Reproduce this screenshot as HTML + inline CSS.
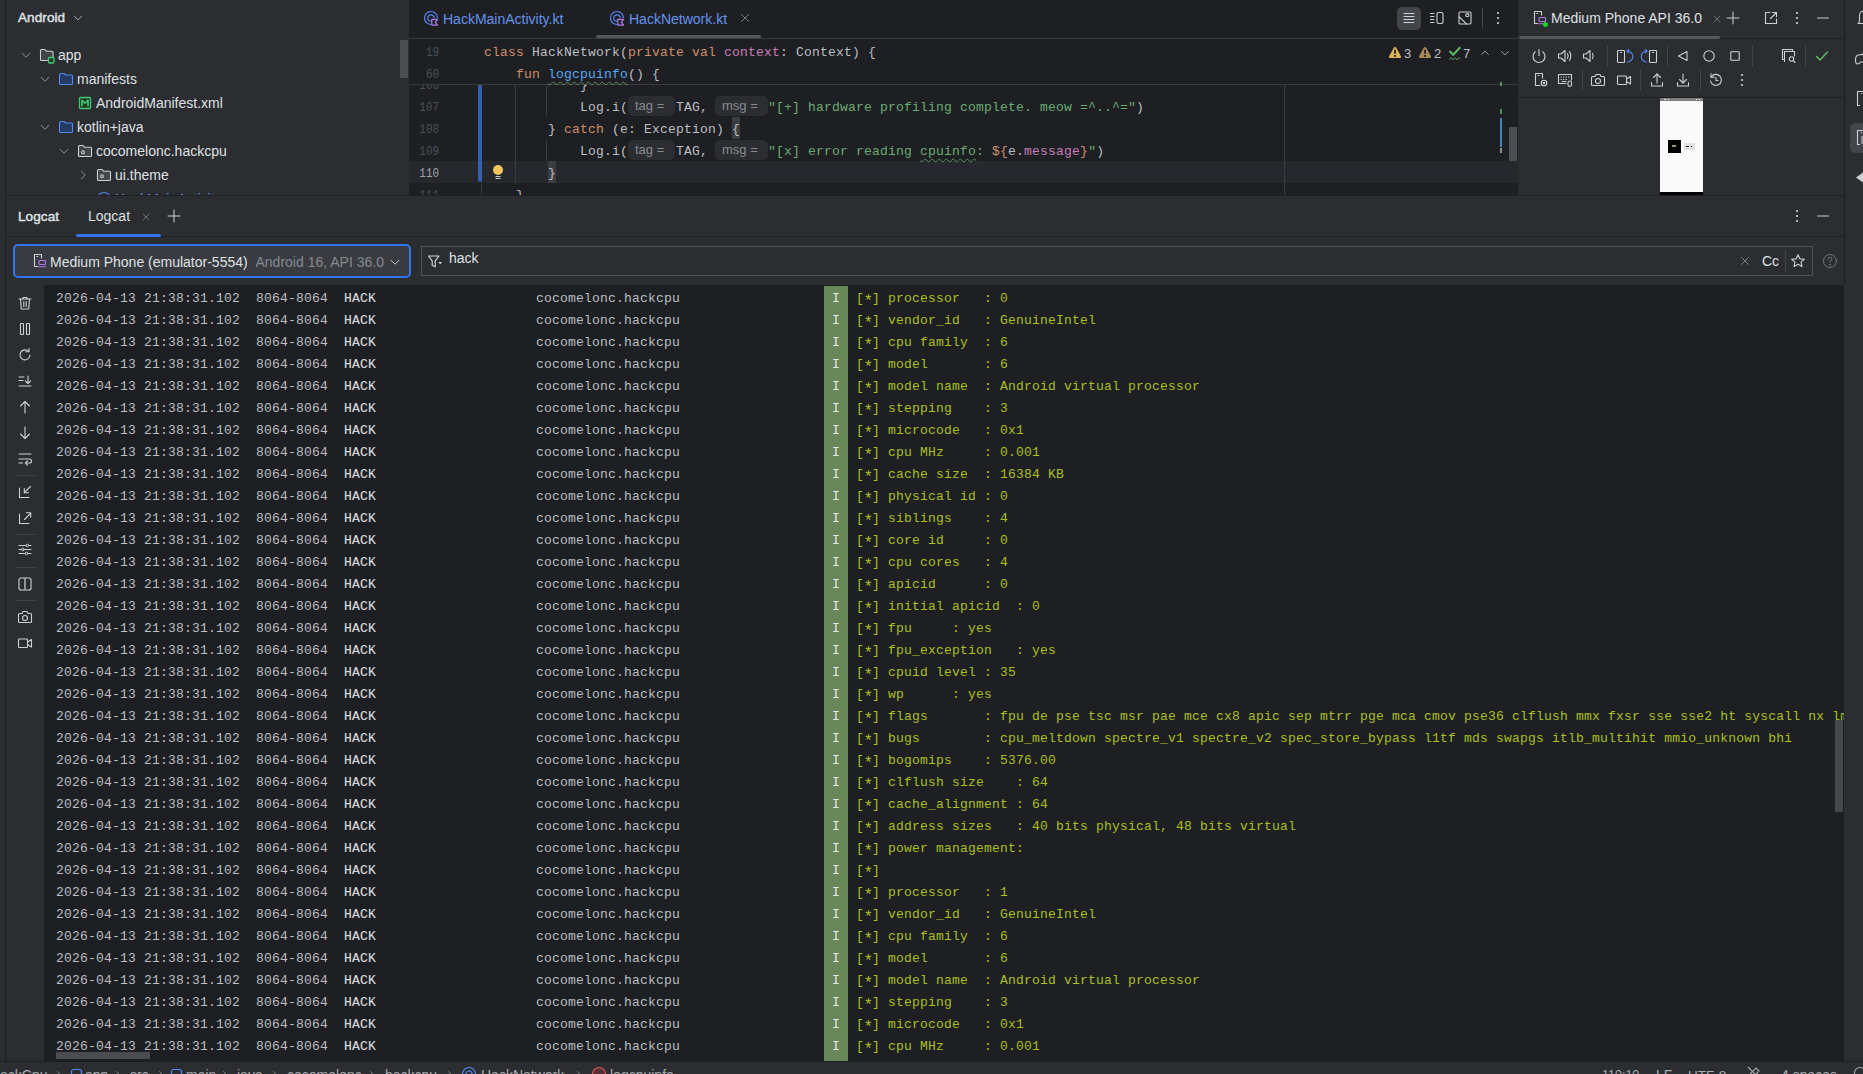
<!DOCTYPE html>
<html><head><meta charset="utf-8">
<style>
*{box-sizing:border-box}
html,body{margin:0;padding:0}
body{width:1863px;height:1074px;overflow:hidden;background:#2B2D30;position:relative;font-family:"Liberation Sans",sans-serif;color:#DFE1E5}
.a{position:absolute}
.t{position:absolute;white-space:pre}
.c{position:absolute;white-space:pre;font-family:"Liberation Mono",monospace;font-size:13px;line-height:13px;letter-spacing:0.2px}
.wv{text-decoration:underline wavy #5F8A5F;text-decoration-thickness:1px;text-underline-offset:3px}
.lr{position:absolute;left:44px;width:1800px;height:22px;font-family:"Liberation Mono",monospace;font-size:13px;letter-spacing:0.2px;line-height:22px;white-space:pre;color:#BCBEC4}
.lr span,.lr b,.lr i{position:absolute;top:2px}
.lr .ts{left:12px}
.lr .tg{left:300px;font-weight:normal;color:#D8DADE;-webkit-text-stroke:0.15px #D8DADE}
.lr .pk{left:492px}
.lr .bd{left:780px;top:0;width:24px;height:22px;background:#6A8759}
.lr .bd:after{content:"I";position:absolute;left:8px;top:2px;color:#E8EAE8;font-style:normal}
.lr .ms{left:812px;color:#A8C023}
.lr .as{left:819.5px;top:5px;font-size:16px;letter-spacing:0;color:#A8C023}
.hint{position:absolute;height:20px;border-radius:5px;background:#2B2D30;color:#868A91;font-size:13px;line-height:20px;white-space:pre;padding-left:7px}
svg{position:absolute;overflow:visible}
.ic{fill:none;stroke:#CED0D6;stroke-width:1.1}
</style></head><body>
<!-- left edge bar -->
<div class="a" style="left:5px;top:0;width:1px;height:1061px;background:#1E1F22"></div>

<!-- ===== project panel ===== -->
<div class="a" style="left:6px;top:0;width:394px;height:195px;background:#2B2D30;overflow:hidden"><div class="a" style="left:-6px;top:0;width:1863px;height:1074px">
<div class="t" style="left:18px;top:11.07px;font-size:13.5px;line-height:13.5px;color:#DFE1E5;font-weight:normal;-webkit-text-stroke:0.45px #DFE1E5;letter-spacing:0.1px">Android</div>
<div class="t" style="left:58px;top:48.15px;font-size:14px;line-height:14px;color:#DFE1E5;font-weight:normal;">app</div>
<div class="t" style="left:77px;top:72.15px;font-size:14px;line-height:14px;color:#DFE1E5;font-weight:normal;">manifests</div>
<div class="t" style="left:96px;top:96.15px;font-size:14px;line-height:14px;color:#DFE1E5;font-weight:normal;">AndroidManifest.xml</div>
<div class="t" style="left:77px;top:120.15px;font-size:14px;line-height:14px;color:#DFE1E5;font-weight:normal;">kotlin+java</div>
<div class="t" style="left:96px;top:144.15px;font-size:14px;line-height:14px;color:#DFE1E5;font-weight:normal;">cocomelonc.hackcpu</div>
<div class="t" style="left:115px;top:168.15px;font-size:14px;line-height:14px;color:#DFE1E5;font-weight:normal;">ui.theme</div>
<div class="t" style="left:115px;top:192.15px;font-size:14px;line-height:14px;color:#6493EE;font-weight:normal;">HackMainActivity</div>
<svg style="left:72.0px;top:12.0px" width="12" height="12" viewBox="0 0 16 16"><g fill="none" stroke="#CED0D6" stroke-width="1.1" stroke-linecap="round" stroke-linejoin="round"><path d="M3.5 6L8 10.5L12.5 6"/></g></svg>
<svg style="left:19.0px;top:48.0px" width="14" height="14" viewBox="0 0 16 16"><g fill="none" stroke="#9DA0A8" stroke-width="1.0" stroke-linecap="round" stroke-linejoin="round"><path d="M3.5 6L8 10.5L12.5 6"/></g></svg>
<svg style="left:38.0px;top:72.0px" width="14" height="14" viewBox="0 0 16 16"><g fill="none" stroke="#9DA0A8" stroke-width="1.0" stroke-linecap="round" stroke-linejoin="round"><path d="M3.5 6L8 10.5L12.5 6"/></g></svg>
<svg style="left:38.0px;top:120.0px" width="14" height="14" viewBox="0 0 16 16"><g fill="none" stroke="#9DA0A8" stroke-width="1.0" stroke-linecap="round" stroke-linejoin="round"><path d="M3.5 6L8 10.5L12.5 6"/></g></svg>
<svg style="left:57.0px;top:144.0px" width="14" height="14" viewBox="0 0 16 16"><g fill="none" stroke="#9DA0A8" stroke-width="1.0" stroke-linecap="round" stroke-linejoin="round"><path d="M3.5 6L8 10.5L12.5 6"/></g></svg>
<svg style="left:76.0px;top:168.0px" width="14" height="14" viewBox="0 0 16 16"><g fill="none" stroke="#9DA0A8" stroke-width="1.0" stroke-linecap="round" stroke-linejoin="round"><path d="M6 3.5L10.5 8L6 12.5"/></g></svg>
<svg style="left:39.0px;top:48.0px" width="16" height="16" viewBox="0 0 16 16"><g fill="none" stroke="#CED0D6" stroke-width="1.1" stroke-linecap="round" stroke-linejoin="round"><path d="M8.5 12.5H2.5Q1.5 12.5 1.5 11.5V2.5Q1.5 1.5 2.5 1.5H6L7.5 3.2H13Q14 3.2 14 4.2V8.5" fill="#43454A"/><rect x="9.5" y="9.5" width="5.5" height="5.5" rx="1.2" stroke="#3FCB6E" fill="#1F3A2A" stroke-width="1.3"/></g></svg>
<svg style="left:58.0px;top:71.0px" width="16" height="16" viewBox="0 0 16 16"><g fill="none" stroke="#CED0D6" stroke-width="1.1" stroke-linecap="round" stroke-linejoin="round"><path d="M1.5 3.5Q1.5 2.5 2.5 2.5H6L7.5 4H13.5Q14.5 4 14.5 5V12.5Q14.5 13.5 13.5 13.5H2.5Q1.5 13.5 1.5 12.5Z" fill="#253B63" stroke="#548AF7"/></g></svg>
<svg style="left:77.0px;top:95.0px" width="16" height="16" viewBox="0 0 16 16"><g fill="none" stroke="#CED0D6" stroke-width="1.1" stroke-linecap="round" stroke-linejoin="round"><rect x="2.5" y="2.5" width="11" height="11" rx="1" stroke="#3FCB6E" fill="#1F3A2A" stroke-width="1.3"/><path d="M5 10.8V5.2L8 8.3L11 5.2V10.8" stroke="#3FCB6E" stroke-width="1.6"/></g></svg>
<svg style="left:58.0px;top:119.0px" width="16" height="16" viewBox="0 0 16 16"><g fill="none" stroke="#CED0D6" stroke-width="1.1" stroke-linecap="round" stroke-linejoin="round"><path d="M1.5 3.5Q1.5 2.5 2.5 2.5H6L7.5 4H13.5Q14.5 4 14.5 5V12.5Q14.5 13.5 13.5 13.5H2.5Q1.5 13.5 1.5 12.5Z" fill="#253B63" stroke="#548AF7"/></g></svg>
<svg style="left:77.0px;top:143.0px" width="16" height="16" viewBox="0 0 16 16"><g fill="none" stroke="#CED0D6" stroke-width="1.1" stroke-linecap="round" stroke-linejoin="round"><path d="M1.5 3.5Q1.5 2.5 2.5 2.5H6L7.5 4.2H13.5Q14.5 4.2 14.5 5.2V12.5Q14.5 13.5 13.5 13.5H2.5Q1.5 13.5 1.5 12.5Z" fill="#43454A"/><circle cx="6" cy="9.2" r="1.4"/></g></svg>
<svg style="left:96.0px;top:167.0px" width="16" height="16" viewBox="0 0 16 16"><g fill="none" stroke="#CED0D6" stroke-width="1.1" stroke-linecap="round" stroke-linejoin="round"><path d="M1.5 3.5Q1.5 2.5 2.5 2.5H6L7.5 4.2H13.5Q14.5 4.2 14.5 5.2V12.5Q14.5 13.5 13.5 13.5H2.5Q1.5 13.5 1.5 12.5Z" fill="#43454A"/><circle cx="6" cy="9.2" r="1.4"/></g></svg>
<svg style="left:96px;top:191px" width="16" height="16" viewBox="0 0 16 16"><circle cx="8" cy="8" r="6.5" fill="none" stroke="#548AF7" stroke-width="1.2"/></svg>
</div></div>
<div class="a" style="left:400px;top:40px;width:8px;height:38px;background:#4D4E51"></div>

<!-- ===== editor ===== -->
<div class="a" style="left:409px;top:0;width:1110px;height:195px;background:#1E1F22;overflow:hidden"><div class="a" style="left:-409px;top:0;width:1863px;height:1074px">
<div class="a" style="left:409px;top:38px;width:1110px;height:1px;background:#393B40"></div>
<div class="a" style="left:596px;top:35px;width:165px;height:3px;border-radius:2px;background:#55575C"></div>
<div class="a" style="left:409px;top:161px;width:1109px;height:22px;background:#26282E"></div>
<!-- change marker -->
<div class="a" style="left:478px;top:84px;width:4px;height:98px;border-radius:0 0 2px 2px;background:#375FAD"></div>
<!-- indent guides -->
<div class="a" style="left:515px;top:85px;width:1px;height:98px;background:#393B40"></div>
<div class="a" style="left:546px;top:85px;width:1px;height:32px;background:#393B40"></div>
<div class="a" style="left:546px;top:139px;width:1px;height:22px;background:#393B40"></div>
<div class="a" style="left:481px;top:183px;width:1px;height:13px;background:#393B40"></div>
<!-- right margin -->
<div class="a" style="left:1284px;top:85px;width:1px;height:110px;background:#393B40"></div>
<!-- brace highlights -->
<div class="a" style="left:732px;top:117px;width:8px;height:22px;background:#3B3D41"></div>
<div class="a" style="left:548px;top:161px;width:8px;height:22px;background:#3B3D41"></div>
<div class="c" style="left:379px;top:79.00px;width:60px;text-align:right;transform:scaleX(0.84);transform-origin:100% 50%;letter-spacing:0"><span style="color:#4B5059" class="">106</span></div>
<div class="c" style="left:580px;top:79.00px;"><span style="color:#BCBEC4" class="">}</span></div>
<div class="c" style="left:379px;top:101.00px;width:60px;text-align:right;transform:scaleX(0.84);transform-origin:100% 50%;letter-spacing:0"><span style="color:#4B5059" class="">107</span></div>
<div class="c" style="left:580px;top:101.00px;"><span style="color:#BCBEC4" class="">Log.i(</span></div>
<div class="c" style="left:676px;top:101.00px;"><span style="color:#BCBEC4" class="">TAG,</span></div>
<div class="c" style="left:768px;top:101.00px;"><span style="color:#6AAB73" class="">&quot;[+] hardware profiling complete. meow =^..^=&quot;</span><span style="color:#BCBEC4" class="">)</span></div>
<div class="c" style="left:379px;top:123.00px;width:60px;text-align:right;transform:scaleX(0.84);transform-origin:100% 50%;letter-spacing:0"><span style="color:#4B5059" class="">108</span></div>
<div class="c" style="left:548px;top:123.00px;"><span style="color:#BCBEC4" class="">} </span><span style="color:#CF8E6D" class="">catch</span><span style="color:#BCBEC4" class=""> (e: Exception) {</span></div>
<div class="c" style="left:379px;top:145.00px;width:60px;text-align:right;transform:scaleX(0.84);transform-origin:100% 50%;letter-spacing:0"><span style="color:#4B5059" class="">109</span></div>
<div class="c" style="left:580px;top:145.00px;"><span style="color:#BCBEC4" class="">Log.i(</span></div>
<div class="c" style="left:676px;top:145.00px;"><span style="color:#BCBEC4" class="">TAG,</span></div>
<div class="c" style="left:768px;top:145.00px;"><span style="color:#6AAB73" class="">&quot;[x] error reading </span><span style="color:#6AAB73" class="wv">cpuinfo</span><span style="color:#6AAB73" class="">: </span><span style="color:#CF8E6D" class="">${</span><span style="color:#BCBEC4" class="">e.</span><span style="color:#C77DBB" class="">message</span><span style="color:#CF8E6D" class="">}</span><span style="color:#6AAB73" class="">&quot;</span><span style="color:#BCBEC4" class="">)</span></div>
<div class="c" style="left:379px;top:167.00px;width:60px;text-align:right;transform:scaleX(0.84);transform-origin:100% 50%;letter-spacing:0"><span style="color:#A1A3AB" class="">110</span></div>
<div class="c" style="left:548px;top:167.00px;"><span style="color:#BCBEC4" class="">}</span></div>
<div class="c" style="left:379px;top:189.00px;width:60px;text-align:right;transform:scaleX(0.84);transform-origin:100% 50%;letter-spacing:0"><span style="color:#4B5059" class="">111</span></div>
<div class="c" style="left:516px;top:189.00px;"><span style="color:#BCBEC4" class="">}</span></div>
<!-- hints -->
<div class="hint" style="left:628px;top:96px;width:47px">tag =</div>
<div class="hint" style="left:715px;top:96px;width:53px">msg =</div>
<div class="hint" style="left:628px;top:140px;width:47px">tag =</div>
<div class="hint" style="left:715px;top:140px;width:53px">msg =</div>
<!-- sticky header -->
<div class="a" style="left:409px;top:39px;width:1109px;height:45px;background:#1E1F22"></div>
<div class="a" style="left:409px;top:84px;width:1109px;height:1px;background:#393B40"></div>
<div class="c" style="left:379px;top:46.00px;width:60px;text-align:right;transform:scaleX(0.84);transform-origin:100% 50%;letter-spacing:0"><span style="color:#4B5059" class="">19</span></div>
<div class="c" style="left:484px;top:46.00px;"><span style="color:#CF8E6D" class="">class</span><span style="color:#BCBEC4" class=""> HackNetwork(</span><span style="color:#CF8E6D" class="">private val</span><span style="color:#BCBEC4" class=""> </span><span style="color:#C77DBB" class="">context</span><span style="color:#BCBEC4" class="">: Context) {</span></div>
<div class="c" style="left:379px;top:68.00px;width:60px;text-align:right;transform:scaleX(0.84);transform-origin:100% 50%;letter-spacing:0"><span style="color:#4B5059" class="">60</span></div>
<div class="c" style="left:516px;top:68.00px;"><span style="color:#CF8E6D" class="">fun</span><span style="color:#BCBEC4" class=""> </span><span style="color:#56A8F5" class="wv">logcpuinfo</span><span style="color:#BCBEC4" class="">() {</span></div>
<!-- editor scrollbar -->
<div class="a" style="left:1509px;top:127px;width:8px;height:34px;background:#4D4E51"></div>
<div class="t" style="left:443px;top:11.65px;font-size:14px;line-height:14px;color:#6493EE;font-weight:normal;">HackMainActivity.kt</div>
<div class="t" style="left:629px;top:11.65px;font-size:14px;line-height:14px;color:#6493EE;font-weight:normal;">HackNetwork.kt</div>
<svg style="left:423px;top:10px" width="16" height="16" viewBox="0 0 16 16"><g fill="none" stroke-width="1.2"><path d="M14.5 8A6.5 6.5 0 1 0 8 14.5" stroke="#548AF7"/><path d="M11.2 8A3.2 3.2 0 1 0 8 11.2" stroke="#548AF7"/><path d="M8.8 9.3H14.6L12.3 12.2L14.6 15.1H8.8Z" stroke="#B07AEB" stroke-linejoin="round"/></g></svg>
<svg style="left:609px;top:10px" width="16" height="16" viewBox="0 0 16 16"><g fill="none" stroke-width="1.2"><path d="M14.5 8A6.5 6.5 0 1 0 8 14.5" stroke="#548AF7"/><path d="M11.2 8A3.2 3.2 0 1 0 8 11.2" stroke="#548AF7"/><path d="M8.8 9.3H14.6L12.3 12.2L14.6 15.1H8.8Z" stroke="#B07AEB" stroke-linejoin="round"/></g></svg>
<svg style="left:738.0px;top:11.0px" width="14" height="14" viewBox="0 0 16 16"><g fill="none" stroke="#868A91" stroke-width="1.0" stroke-linecap="round" stroke-linejoin="round"><path d="M4 4L12 12M12 4L4 12"/></g></svg>
<div class="a" style="left:1397px;top:7px;width:24px;height:23px;border-radius:5px;background:#43454A"></div>
<svg style="left:1400.5px;top:10.0px" width="16" height="16" viewBox="0 0 16 16"><g fill="none" stroke="#CED0D6" stroke-width="1.1" stroke-linecap="round" stroke-linejoin="round"><path d="M3 3.5H13M3 6.5H13M3 9.5H13M3 12.5H13"/></g></svg>
<svg style="left:1428.5px;top:10.0px" width="16" height="16" viewBox="0 0 16 16"><g fill="none" stroke="#CED0D6" stroke-width="1.1" stroke-linecap="round" stroke-linejoin="round"><path d="M1.5 3.5H5M1.5 6.5H5M1.5 9.5H5M1.5 12.5H5"/><rect x="8" y="2.5" width="6" height="11" rx="1.5"/></g></svg>
<svg style="left:1456.5px;top:10.0px" width="16" height="16" viewBox="0 0 16 16"><g fill="none" stroke="#CED0D6" stroke-width="1.1" stroke-linecap="round" stroke-linejoin="round"><rect x="2" y="2" width="12" height="12" rx="1.2"/><path d="M2.2 7L9.5 13.8"/><circle cx="10.3" cy="5.2" r="1.6"/></g></svg>
<div class="a" style="left:1482px;top:8px;width:1px;height:20px;background:#43454A"></div>
<svg style="left:1490.0px;top:10.0px" width="16" height="16" viewBox="0 0 16 16"><g fill="none" stroke="#CED0D6" stroke-width="1.1" stroke-linecap="round" stroke-linejoin="round"><g fill="#CED0D6" stroke="none"><circle cx="8" cy="3" r="1.1"/><circle cx="8" cy="8" r="1.1"/><circle cx="8" cy="13" r="1.1"/></g></g></svg>
<svg style="left:1388px;top:46px" width="14" height="14" viewBox="0 0 14 14"><path d="M7 1Q7.9 1 8.4 1.9L12.8 10Q13.6 12 11.6 12H2.4Q0.4 12 1.2 10L5.6 1.9Q6.1 1 7 1Z" fill="#DFB25A"/><path d="M7 3.8V7.8" stroke="#1E1F22" stroke-width="1.8"/><rect x="6.1" y="9" width="1.8" height="1.8" fill="#1E1F22"/></svg>
<div class="t" style="left:1404px;top:47.00px;font-size:13px;line-height:13px;color:#BCBEC4;font-weight:normal;">3</div>
<svg style="left:1418px;top:46px" width="14" height="14" viewBox="0 0 14 14"><path d="M7 1Q7.9 1 8.4 1.9L12.8 10Q13.6 12 11.6 12H2.4Q0.4 12 1.2 10L5.6 1.9Q6.1 1 7 1Z" fill="#A68A55"/><path d="M7 3.8V7.8" stroke="#1E1F22" stroke-width="1.8"/><rect x="6.1" y="9" width="1.8" height="1.8" fill="#1E1F22"/></svg>
<div class="t" style="left:1434px;top:47.00px;font-size:13px;line-height:13px;color:#BCBEC4;font-weight:normal;">2</div>
<svg style="left:1448px;top:45px" width="14" height="16" viewBox="0 0 14 16"><path d="M1.5 6L5.2 9.8L12.2 2.2" fill="none" stroke="#5FB865" stroke-width="2"/><path d="M1 15L3 12.5L5 15L7 12.5L9 15L11 12.5L12.5 14" fill="none" stroke="#549159" stroke-width="1"/></svg>
<div class="t" style="left:1463px;top:47.00px;font-size:13px;line-height:13px;color:#BCBEC4;font-weight:normal;">7</div>
<svg style="left:1479.0px;top:47.0px" width="12" height="12" viewBox="0 0 16 16"><g fill="none" stroke="#CED0D6" stroke-width="1.0" stroke-linecap="round" stroke-linejoin="round"><path d="M3.5 10L8 5.5L12.5 10"/></g></svg>
<svg style="left:1499.0px;top:47.0px" width="12" height="12" viewBox="0 0 16 16"><g fill="none" stroke="#CED0D6" stroke-width="1.0" stroke-linecap="round" stroke-linejoin="round"><path d="M3.5 6L8 10.5L12.5 6"/></g></svg>
<svg style="left:490px;top:164px" width="16" height="16" viewBox="0 0 16 16"><circle cx="8" cy="6" r="5" fill="#F2C55C"/><path d="M5.5 12.5H10.5M5.5 14.5H10.5" stroke="#DFE1E5" stroke-width="0.9"/></svg>
<div class="a" style="left:1500px;top:82px;width:2px;height:4px;background:#549159"></div>
<div class="a" style="left:1500px;top:109px;width:2px;height:5px;background:#549159"></div>
<div class="a" style="left:1500px;top:118px;width:2px;height:29px;background:#4A82C0"></div>
<div class="a" style="left:1500px;top:148px;width:2px;height:5px;background:#8C8F94"></div>
</div></div>

<!-- ===== running devices ===== -->
<div class="a" style="left:1518px;top:0;width:327px;height:195px;background:#2B2D30"></div>
<div class="a" style="left:1518px;top:38px;width:327px;height:1px;background:#1E1F22"></div>
<div class="a" style="left:1519px;top:36px;width:201px;height:3px;border-radius:2px;background:#55575C"></div>
<div class="a" style="left:1518px;top:97px;width:327px;height:1px;background:#1E1F22"></div>
<svg style="left:1532.0px;top:10.0px" width="16" height="16" viewBox="0 0 16 16"><g fill="none" stroke="#CED0D6" stroke-width="1.1" stroke-linecap="round" stroke-linejoin="round"><path d="M5.5 13.5H2.5V1.5H9.5V5"/><path d="M4.8 3.5H5.8"/><rect x="7" y="7.5" width="6.5" height="4" rx="0.8" stroke="#B07AEB"/><path d="M6.5 13.8H13.8" stroke="#B07AEB"/></g></svg>
<div class="a" style="left:1543px;top:22px;width:5px;height:5px;border-radius:3px;background:#19D31F"></div>
<div class="t" style="left:1551px;top:11.15px;font-size:14px;line-height:14px;color:#DFE1E5;font-weight:normal;">Medium Phone API 36.0</div>
<svg style="left:1710.5px;top:12.5px" width="12" height="12" viewBox="0 0 16 16"><g fill="none" stroke="#868A91" stroke-width="1.0" stroke-linecap="round" stroke-linejoin="round"><path d="M4 4L12 12M12 4L4 12"/></g></svg>
<svg style="left:1724.5px;top:9.5px" width="16" height="16" viewBox="0 0 16 16"><g fill="none" stroke="#CED0D6" stroke-width="1.0" stroke-linecap="round" stroke-linejoin="round"><path d="M8 2V14M2 8H14"/></g></svg>
<svg style="left:1763.0px;top:10.0px" width="16" height="16" viewBox="0 0 16 16"><g fill="none" stroke="#CED0D6" stroke-width="1.1" stroke-linecap="round" stroke-linejoin="round"><path d="M7 2.5H2.5V13.5H13.5V9"/><path d="M9.5 2.5H13.5V6.5"/><path d="M13.5 2.5L7.5 8.5"/></g></svg>
<svg style="left:1789.0px;top:10.0px" width="16" height="16" viewBox="0 0 16 16"><g fill="none" stroke="#CED0D6" stroke-width="1.1" stroke-linecap="round" stroke-linejoin="round"><g fill="#CED0D6" stroke="none"><circle cx="8" cy="3" r="1.1"/><circle cx="8" cy="8" r="1.1"/><circle cx="8" cy="13" r="1.1"/></g></g></svg>
<svg style="left:1814.5px;top:10.0px" width="16" height="16" viewBox="0 0 16 16"><g fill="none" stroke="#CED0D6" stroke-width="1.1" stroke-linecap="round" stroke-linejoin="round"><path d="M2.5 8H13.5"/></g></svg>
<svg style="left:1531.0px;top:48.0px" width="16" height="16" viewBox="0 0 16 16"><g fill="none" stroke="#CED0D6" stroke-width="1.1" stroke-linecap="round" stroke-linejoin="round"><path d="M4.2 3.8A6 6 0 1 0 11.8 3.8"/><path d="M8 1.5V7.5"/></g></svg>
<svg style="left:1557.0px;top:48.0px" width="16" height="16" viewBox="0 0 16 16"><g fill="none" stroke="#CED0D6" stroke-width="1.1" stroke-linecap="round" stroke-linejoin="round"><path d="M1.5 6H4L8 2.5V13.5L4 10H1.5Z"/><path d="M10.5 5.5Q11.8 8 10.5 10.5"/><path d="M12.5 3.5Q15 8 12.5 12.5"/></g></svg>
<svg style="left:1581.0px;top:48.0px" width="16" height="16" viewBox="0 0 16 16"><g fill="none" stroke="#CED0D6" stroke-width="1.1" stroke-linecap="round" stroke-linejoin="round"><path d="M2.5 6H5L9 2.5V13.5L5 10H2.5Z"/><path d="M11.5 5.5Q12.8 8 11.5 10.5"/></g></svg>
<svg style="left:1616.0px;top:48.0px" width="16" height="16" viewBox="0 0 16 16"><g fill="none" stroke="#CED0D6" stroke-width="1.1" stroke-linecap="round" stroke-linejoin="round"><rect x="1.5" y="2.5" width="7" height="12" rx="0.8"/><path d="M4.5 4.5H5.5"/><g stroke="#548AF7"><path d="M11 3A5.5 5.5 0 0 1 11.5 14"/><path d="M11 3L13 1.5M11 3L12.8 4.8"/></g></g></svg>
<svg style="left:1642.0px;top:48.0px" width="16" height="16" viewBox="0 0 16 16"><g fill="none" stroke="#CED0D6" stroke-width="1.1" stroke-linecap="round" stroke-linejoin="round"><rect x="7.5" y="2.5" width="7" height="12" rx="0.8"/><path d="M10.5 4.5H11.5"/><g stroke="#548AF7"><path d="M5 3A5.5 5.5 0 0 0 4.5 14"/><path d="M5 3L3 1.5M5 3L3.2 4.8"/></g></g></svg>
<svg style="left:1675.0px;top:48.0px" width="16" height="16" viewBox="0 0 16 16"><g fill="none" stroke="#CED0D6" stroke-width="1.1" stroke-linecap="round" stroke-linejoin="round"><path d="M3.5 8L12 3.5V12.5Z"/></g></svg>
<svg style="left:1701.0px;top:48.0px" width="16" height="16" viewBox="0 0 16 16"><g fill="none" stroke="#CED0D6" stroke-width="1.1" stroke-linecap="round" stroke-linejoin="round"><circle cx="8" cy="8" r="5.2"/></g></svg>
<svg style="left:1727.0px;top:48.0px" width="16" height="16" viewBox="0 0 16 16"><g fill="none" stroke="#CED0D6" stroke-width="1.1" stroke-linecap="round" stroke-linejoin="round"><rect x="3.8" y="3.8" width="8.4" height="8.4" rx="0.5"/></g></svg>
<svg style="left:1781.0px;top:48.0px" width="16" height="16" viewBox="0 0 16 16"><g fill="none" stroke="#CED0D6" stroke-width="1.1" stroke-linecap="round" stroke-linejoin="round"><path d="M3.5 11.5H1.5V1.5H11.5V3.5"/><path d="M3.5 13.5V3.5H13.5V8"/><circle cx="10.5" cy="11" r="2.2"/><path d="M12.2 12.7L14 14.5"/></g></svg>
<svg style="left:1814.0px;top:48.0px" width="16" height="16" viewBox="0 0 16 16"><g fill="none" stroke="#5FB865" stroke-width="1.6" stroke-linecap="round" stroke-linejoin="round"><path d="M2.5 8.5L6 12L13.5 4"/></g></svg>
<div class="a" style="left:1607px;top:46px;width:1px;height:20px;background:#43454A"></div>
<div class="a" style="left:1667px;top:46px;width:1px;height:20px;background:#43454A"></div>
<div class="a" style="left:1752px;top:46px;width:1px;height:20px;background:#43454A"></div>
<div class="a" style="left:1805px;top:46px;width:1px;height:20px;background:#43454A"></div>
<svg style="left:1533.0px;top:72.0px" width="16" height="16" viewBox="0 0 16 16"><g fill="none" stroke="#CED0D6" stroke-width="1.1" stroke-linecap="round" stroke-linejoin="round"><path d="M7 13.5H2.5V1.5H9.5V6"/><path d="M5 3.5H6"/><circle cx="11" cy="11" r="2.8"/><circle cx="11" cy="11" r="0.8"/></g></svg>
<svg style="left:1557.0px;top:72.0px" width="16" height="16" viewBox="0 0 16 16"><g fill="none" stroke="#CED0D6" stroke-width="1.1" stroke-linecap="round" stroke-linejoin="round"><path d="M9 11.5H1.5V2.5H14.5V8"/><path d="M4 5H4.5M6.5 5H7M9 5H9.5M11.5 5H12M4 7.5H4.5M6.5 7.5H7M9 7.5H9.5M5 9.5H9"/><rect x="11" y="9" width="3.5" height="5.5" rx="1.7"/></g></svg>
<svg style="left:1590.0px;top:72.0px" width="16" height="16" viewBox="0 0 16 16"><g fill="none" stroke="#CED0D6" stroke-width="1.1" stroke-linecap="round" stroke-linejoin="round"><path d="M1.5 5.5Q1.5 4.5 2.5 4.5H5L6 2.5H10L11 4.5H13.5Q14.5 4.5 14.5 5.5V12.5Q14.5 13.5 13.5 13.5H2.5Q1.5 13.5 1.5 12.5Z"/><circle cx="8" cy="9" r="2.5"/></g></svg>
<svg style="left:1616.0px;top:72.0px" width="16" height="16" viewBox="0 0 16 16"><g fill="none" stroke="#CED0D6" stroke-width="1.1" stroke-linecap="round" stroke-linejoin="round"><rect x="1.5" y="4" width="9" height="8.5" rx="0.8"/><path d="M10.5 7L14.5 4.5V12L10.5 9.5"/></g></svg>
<svg style="left:1649.0px;top:72.0px" width="16" height="16" viewBox="0 0 16 16"><g fill="none" stroke="#CED0D6" stroke-width="1.1" stroke-linecap="round" stroke-linejoin="round"><path d="M2.5 10.5V14H13.5V10.5"/><path d="M8 2V11"/><path d="M4.5 5.5L8 2L11.5 5.5"/></g></svg>
<svg style="left:1675.0px;top:72.0px" width="16" height="16" viewBox="0 0 16 16"><g fill="none" stroke="#CED0D6" stroke-width="1.1" stroke-linecap="round" stroke-linejoin="round"><path d="M2.5 10.5V14H13.5V10.5"/><path d="M8 2V11"/><path d="M4.5 7.5L8 11L11.5 7.5"/></g></svg>
<svg style="left:1708.0px;top:72.0px" width="16" height="16" viewBox="0 0 16 16"><g fill="none" stroke="#CED0D6" stroke-width="1.1" stroke-linecap="round" stroke-linejoin="round"><path d="M3.2 5A5.5 5.5 0 1 1 2.5 9"/><path d="M3 1.8V5.2H6.4"/><path d="M8 5.5V8.5H10"/></g></svg>
<svg style="left:1734.0px;top:72.0px" width="16" height="16" viewBox="0 0 16 16"><g fill="none" stroke="#CED0D6" stroke-width="1.1" stroke-linecap="round" stroke-linejoin="round"><g fill="#CED0D6" stroke="none"><circle cx="8" cy="3" r="1.1"/><circle cx="8" cy="8" r="1.1"/><circle cx="8" cy="13" r="1.1"/></g></g></svg>
<div class="a" style="left:1582px;top:70px;width:1px;height:20px;background:#43454A"></div>
<div class="a" style="left:1640px;top:70px;width:1px;height:20px;background:#43454A"></div>
<div class="a" style="left:1700px;top:70px;width:1px;height:20px;background:#43454A"></div>
<!-- phone preview -->
<div class="a" style="left:1660px;top:98px;width:43px;height:94px;background:#FAFAFA"></div>
<div class="a" style="left:1660px;top:98px;width:43px;height:3px;background:#7E7E7E"></div>
<div class="a" style="left:1664px;top:99px;width:1px;height:1px;background:#DDD"></div>
<div class="a" style="left:1665px;top:99px;width:1px;height:1px;background:#FFF"></div>
<div class="a" style="left:1668px;top:99px;width:1px;height:1px;background:#FFF"></div>
<div class="a" style="left:1696px;top:99px;width:1px;height:1px;background:#FFF"></div>
<div class="a" style="left:1699px;top:99px;width:1px;height:1px;background:#FFF"></div>
<div class="a" style="left:1660px;top:192px;width:43px;height:3px;background:#000"></div>
<div class="a" style="left:1668px;top:140px;width:13px;height:13px;background:#000"></div>
<div class="a" style="left:1672px;top:145px;width:4px;height:2px;background:#8A9A80"></div>
<div class="a" style="left:1684px;top:143px;width:11px;height:7px;background:#E0E0E0"></div>
<div class="a" style="left:1686px;top:146px;width:3px;height:1px;background:#111"></div>
<div class="a" style="left:1691px;top:146px;width:1px;height:1px;background:#111"></div>

<!-- right strip -->
<div class="a" style="left:1845px;top:0;width:18px;height:1061px;overflow:hidden"><div class="a" style="left:-1845px;top:0;width:1863px;height:1074px"><div class="a" style="left:1850px;top:123px;width:20px;height:30px;border-radius:5px;background:#43454A"></div>
<svg style="left:1856px;top:9px" width="14" height="16" viewBox="0 0 14 16"><path d="M1.5 14.5H13M2.5 14.5Q3.5 13 3.5 11V7Q3.5 2 8 2Q12.5 2 12.5 7" fill="none" stroke="#CED0D6" stroke-width="1.1"/></svg>
<svg style="left:1854px;top:51px" width="14" height="16" viewBox="0 0 14 16"><path d="M4 4Q1.5 5 1.5 9Q1.5 13 3.5 13Q5 13 6.5 11H12V3.5Q9 2.5 6.5 4Q5 3.5 4 4Z" fill="none" stroke="#CED0D6" stroke-width="1.1"/></svg>
<svg style="left:1856px;top:90px" width="14" height="17" viewBox="0 0 14 17"><path d="M4 15.5H1.5V1.5H12" fill="none" stroke="#CED0D6" stroke-width="1.1"/><path d="M5 3.5H6" stroke="#CED0D6"/></svg>
<svg style="left:1856px;top:129px" width="14" height="17" viewBox="0 0 14 17"><path d="M4 15.5H1.5V1.5H12" fill="none" stroke="#CED0D6" stroke-width="1.1"/><path d="M5 3.5H6M6 7V15" stroke="#CED0D6"/></svg>
<svg style="left:1855px;top:170px" width="14" height="15" viewBox="0 0 14 15"><path d="M1 7.5L10 1V14Z" fill="#CED0D6"/></svg></div></div>
<div class="a" style="left:1844px;top:0;width:1px;height:1061px;background:#1E1F22"></div>

<!-- horizontal border -->
<div class="a" style="left:6px;top:195px;width:1838px;height:1px;background:#1E1F22"></div>

<!-- ===== logcat ===== -->
<div class="a" style="left:6px;top:236px;width:1838px;height:1px;background:#1E1F22"></div>
<div class="a" style="left:76px;top:234px;width:85px;height:3px;border-radius:2px;background:#3574F0"></div>
<!-- device combo -->
<div class="a" style="left:13px;top:244px;width:398px;height:34px;border:2px solid #3574F0;border-radius:5px;background:#393B40"></div>
<!-- filter field -->
<div class="a" style="left:421px;top:246px;width:1392px;height:30px;border:1px solid #4E5157;background:#2B2D30"></div>
<div class="a" style="left:1785px;top:250px;width:1px;height:22px;background:#43454A"></div>
<div class="t" style="left:18px;top:209.57px;font-size:13.5px;line-height:13.5px;color:#DFE1E5;font-weight:normal;-webkit-text-stroke:0.45px #DFE1E5;letter-spacing:0.1px">Logcat</div>
<div class="t" style="left:88px;top:209.15px;font-size:14px;line-height:14px;color:#DFE1E5;font-weight:normal;">Logcat</div>
<svg style="left:140.0px;top:211.0px" width="12" height="12" viewBox="0 0 16 16"><g fill="none" stroke="#868A91" stroke-width="1.0" stroke-linecap="round" stroke-linejoin="round"><path d="M4 4L12 12M12 4L4 12"/></g></svg>
<svg style="left:165.5px;top:207.5px" width="16" height="16" viewBox="0 0 16 16"><g fill="none" stroke="#CED0D6" stroke-width="1.0" stroke-linecap="round" stroke-linejoin="round"><path d="M8 2V14M2 8H14"/></g></svg>
<svg style="left:1789.0px;top:208.0px" width="16" height="16" viewBox="0 0 16 16"><g fill="none" stroke="#CED0D6" stroke-width="1.1" stroke-linecap="round" stroke-linejoin="round"><g fill="#CED0D6" stroke="none"><circle cx="8" cy="3" r="1.1"/><circle cx="8" cy="8" r="1.1"/><circle cx="8" cy="13" r="1.1"/></g></g></svg>
<svg style="left:1814.5px;top:208.0px" width="16" height="16" viewBox="0 0 16 16"><g fill="none" stroke="#CED0D6" stroke-width="1.1" stroke-linecap="round" stroke-linejoin="round"><path d="M2.5 8H13.5"/></g></svg>
<svg style="left:32.0px;top:253.0px" width="16" height="16" viewBox="0 0 16 16"><g fill="none" stroke="#CED0D6" stroke-width="1.1" stroke-linecap="round" stroke-linejoin="round"><path d="M5.5 13.5H2.5V1.5H9.5V5"/><path d="M4.8 3.5H5.8"/><rect x="7" y="7.5" width="6.5" height="4" rx="0.8" stroke="#B07AEB"/><path d="M6.5 13.8H13.8" stroke="#B07AEB"/></g></svg>
<div class="t" style="left:50px;top:254.65px;font-size:14px;line-height:14px;color:#DFE1E5;font-weight:normal;">Medium Phone (emulator-5554)</div>
<div class="t" style="left:255.5px;top:254.65px;font-size:14px;line-height:14px;color:#868A91;font-weight:normal;">Android 16, API 36.0</div>
<svg style="left:388.0px;top:255.0px" width="14" height="14" viewBox="0 0 16 16"><g fill="none" stroke="#CED0D6" stroke-width="1.1" stroke-linecap="round" stroke-linejoin="round"><path d="M3.5 6L8 10.5L12.5 6"/></g></svg>
<svg style="left:427.0px;top:252.5px" width="16" height="16" viewBox="0 0 16 16"><g fill="none" stroke="#CED0D6" stroke-width="1.2" stroke-linecap="round" stroke-linejoin="round"><path d="M1.5 3H12L8.2 7.8V13.8L5.2 12.5V7.8Z"/><path d="M11.2 9H15.2L13.2 11.2Z" fill="#CED0D6" stroke="none"/></g></svg>
<div class="t" style="left:449px;top:251.15px;font-size:14px;line-height:14px;color:#DFE1E5;font-weight:normal;">hack</div>
<svg style="left:1738.0px;top:254.0px" width="14" height="14" viewBox="0 0 16 16"><g fill="none" stroke="#868A91" stroke-width="1.0" stroke-linecap="round" stroke-linejoin="round"><path d="M4 4L12 12M12 4L4 12"/></g></svg>
<div class="t" style="left:1762px;top:254.15px;font-size:14px;line-height:14px;color:#DFE1E5;font-weight:normal;">Cc</div>
<svg style="left:1790.0px;top:253.0px" width="16" height="16" viewBox="0 0 16 16"><g fill="none" stroke="#CED0D6" stroke-width="1.1" stroke-linecap="round" stroke-linejoin="round"><path d="M8 1.8L9.9 5.9L14.3 6.3L11 9.2L12 13.6L8 11.3L4 13.6L5 9.2L1.7 6.3L6.1 5.9Z"/></g></svg>
<svg style="left:1822.0px;top:253.0px" width="16" height="16" viewBox="0 0 16 16"><g fill="none" stroke="#6F737A" stroke-width="1.0" stroke-linecap="round" stroke-linejoin="round"><circle cx="8" cy="8" r="6.5"/><path d="M6 6.3Q6 4.3 8 4.3Q10 4.3 10 6.1Q10 7.3 8 8.2V9.5"/><circle cx="8" cy="11.7" r="0.5" fill="#6F737A"/></g></svg>

<!-- logcat content -->
<div class="a" style="left:44px;top:285px;width:1800px;height:776px;background:#1E1F22"></div>
<div class="lr" style="top:286px"><span class="ts">2026-04-13 21:38:31.102  8064-8064  </span><b class="tg">HACK</b><span class="pk">cocomelonc.hackcpu</span><i class="bd"></i><span class="ms">[ ] processor   : 0</span><span class="as">*</span></div>
<div class="lr" style="top:308px"><span class="ts">2026-04-13 21:38:31.102  8064-8064  </span><b class="tg">HACK</b><span class="pk">cocomelonc.hackcpu</span><i class="bd"></i><span class="ms">[ ] vendor_id   : GenuineIntel</span><span class="as">*</span></div>
<div class="lr" style="top:330px"><span class="ts">2026-04-13 21:38:31.102  8064-8064  </span><b class="tg">HACK</b><span class="pk">cocomelonc.hackcpu</span><i class="bd"></i><span class="ms">[ ] cpu family  : 6</span><span class="as">*</span></div>
<div class="lr" style="top:352px"><span class="ts">2026-04-13 21:38:31.102  8064-8064  </span><b class="tg">HACK</b><span class="pk">cocomelonc.hackcpu</span><i class="bd"></i><span class="ms">[ ] model       : 6</span><span class="as">*</span></div>
<div class="lr" style="top:374px"><span class="ts">2026-04-13 21:38:31.102  8064-8064  </span><b class="tg">HACK</b><span class="pk">cocomelonc.hackcpu</span><i class="bd"></i><span class="ms">[ ] model name  : Android virtual processor</span><span class="as">*</span></div>
<div class="lr" style="top:396px"><span class="ts">2026-04-13 21:38:31.102  8064-8064  </span><b class="tg">HACK</b><span class="pk">cocomelonc.hackcpu</span><i class="bd"></i><span class="ms">[ ] stepping    : 3</span><span class="as">*</span></div>
<div class="lr" style="top:418px"><span class="ts">2026-04-13 21:38:31.102  8064-8064  </span><b class="tg">HACK</b><span class="pk">cocomelonc.hackcpu</span><i class="bd"></i><span class="ms">[ ] microcode   : 0x1</span><span class="as">*</span></div>
<div class="lr" style="top:440px"><span class="ts">2026-04-13 21:38:31.102  8064-8064  </span><b class="tg">HACK</b><span class="pk">cocomelonc.hackcpu</span><i class="bd"></i><span class="ms">[ ] cpu MHz     : 0.001</span><span class="as">*</span></div>
<div class="lr" style="top:462px"><span class="ts">2026-04-13 21:38:31.102  8064-8064  </span><b class="tg">HACK</b><span class="pk">cocomelonc.hackcpu</span><i class="bd"></i><span class="ms">[ ] cache size  : 16384 KB</span><span class="as">*</span></div>
<div class="lr" style="top:484px"><span class="ts">2026-04-13 21:38:31.102  8064-8064  </span><b class="tg">HACK</b><span class="pk">cocomelonc.hackcpu</span><i class="bd"></i><span class="ms">[ ] physical id : 0</span><span class="as">*</span></div>
<div class="lr" style="top:506px"><span class="ts">2026-04-13 21:38:31.102  8064-8064  </span><b class="tg">HACK</b><span class="pk">cocomelonc.hackcpu</span><i class="bd"></i><span class="ms">[ ] siblings    : 4</span><span class="as">*</span></div>
<div class="lr" style="top:528px"><span class="ts">2026-04-13 21:38:31.102  8064-8064  </span><b class="tg">HACK</b><span class="pk">cocomelonc.hackcpu</span><i class="bd"></i><span class="ms">[ ] core id     : 0</span><span class="as">*</span></div>
<div class="lr" style="top:550px"><span class="ts">2026-04-13 21:38:31.102  8064-8064  </span><b class="tg">HACK</b><span class="pk">cocomelonc.hackcpu</span><i class="bd"></i><span class="ms">[ ] cpu cores   : 4</span><span class="as">*</span></div>
<div class="lr" style="top:572px"><span class="ts">2026-04-13 21:38:31.102  8064-8064  </span><b class="tg">HACK</b><span class="pk">cocomelonc.hackcpu</span><i class="bd"></i><span class="ms">[ ] apicid      : 0</span><span class="as">*</span></div>
<div class="lr" style="top:594px"><span class="ts">2026-04-13 21:38:31.102  8064-8064  </span><b class="tg">HACK</b><span class="pk">cocomelonc.hackcpu</span><i class="bd"></i><span class="ms">[ ] initial apicid  : 0</span><span class="as">*</span></div>
<div class="lr" style="top:616px"><span class="ts">2026-04-13 21:38:31.102  8064-8064  </span><b class="tg">HACK</b><span class="pk">cocomelonc.hackcpu</span><i class="bd"></i><span class="ms">[ ] fpu     : yes</span><span class="as">*</span></div>
<div class="lr" style="top:638px"><span class="ts">2026-04-13 21:38:31.102  8064-8064  </span><b class="tg">HACK</b><span class="pk">cocomelonc.hackcpu</span><i class="bd"></i><span class="ms">[ ] fpu_exception   : yes</span><span class="as">*</span></div>
<div class="lr" style="top:660px"><span class="ts">2026-04-13 21:38:31.102  8064-8064  </span><b class="tg">HACK</b><span class="pk">cocomelonc.hackcpu</span><i class="bd"></i><span class="ms">[ ] cpuid level : 35</span><span class="as">*</span></div>
<div class="lr" style="top:682px"><span class="ts">2026-04-13 21:38:31.102  8064-8064  </span><b class="tg">HACK</b><span class="pk">cocomelonc.hackcpu</span><i class="bd"></i><span class="ms">[ ] wp      : yes</span><span class="as">*</span></div>
<div class="lr" style="top:704px"><span class="ts">2026-04-13 21:38:31.102  8064-8064  </span><b class="tg">HACK</b><span class="pk">cocomelonc.hackcpu</span><i class="bd"></i><span class="ms">[ ] flags       : fpu de pse tsc msr pae mce cx8 apic sep mtrr pge mca cmov pse36 clflush mmx fxsr sse sse2 ht syscall nx lm constant_tsc</span><span class="as">*</span></div>
<div class="lr" style="top:726px"><span class="ts">2026-04-13 21:38:31.102  8064-8064  </span><b class="tg">HACK</b><span class="pk">cocomelonc.hackcpu</span><i class="bd"></i><span class="ms">[ ] bugs        : cpu_meltdown spectre_v1 spectre_v2 spec_store_bypass l1tf mds swapgs itlb_multihit mmio_unknown bhi</span><span class="as">*</span></div>
<div class="lr" style="top:748px"><span class="ts">2026-04-13 21:38:31.102  8064-8064  </span><b class="tg">HACK</b><span class="pk">cocomelonc.hackcpu</span><i class="bd"></i><span class="ms">[ ] bogomips    : 5376.00</span><span class="as">*</span></div>
<div class="lr" style="top:770px"><span class="ts">2026-04-13 21:38:31.102  8064-8064  </span><b class="tg">HACK</b><span class="pk">cocomelonc.hackcpu</span><i class="bd"></i><span class="ms">[ ] clflush size    : 64</span><span class="as">*</span></div>
<div class="lr" style="top:792px"><span class="ts">2026-04-13 21:38:31.102  8064-8064  </span><b class="tg">HACK</b><span class="pk">cocomelonc.hackcpu</span><i class="bd"></i><span class="ms">[ ] cache_alignment : 64</span><span class="as">*</span></div>
<div class="lr" style="top:814px"><span class="ts">2026-04-13 21:38:31.102  8064-8064  </span><b class="tg">HACK</b><span class="pk">cocomelonc.hackcpu</span><i class="bd"></i><span class="ms">[ ] address sizes   : 40 bits physical, 48 bits virtual</span><span class="as">*</span></div>
<div class="lr" style="top:836px"><span class="ts">2026-04-13 21:38:31.102  8064-8064  </span><b class="tg">HACK</b><span class="pk">cocomelonc.hackcpu</span><i class="bd"></i><span class="ms">[ ] power management:</span><span class="as">*</span></div>
<div class="lr" style="top:858px"><span class="ts">2026-04-13 21:38:31.102  8064-8064  </span><b class="tg">HACK</b><span class="pk">cocomelonc.hackcpu</span><i class="bd"></i><span class="ms">[ ] </span><span class="as">*</span></div>
<div class="lr" style="top:880px"><span class="ts">2026-04-13 21:38:31.102  8064-8064  </span><b class="tg">HACK</b><span class="pk">cocomelonc.hackcpu</span><i class="bd"></i><span class="ms">[ ] processor   : 1</span><span class="as">*</span></div>
<div class="lr" style="top:902px"><span class="ts">2026-04-13 21:38:31.102  8064-8064  </span><b class="tg">HACK</b><span class="pk">cocomelonc.hackcpu</span><i class="bd"></i><span class="ms">[ ] vendor_id   : GenuineIntel</span><span class="as">*</span></div>
<div class="lr" style="top:924px"><span class="ts">2026-04-13 21:38:31.102  8064-8064  </span><b class="tg">HACK</b><span class="pk">cocomelonc.hackcpu</span><i class="bd"></i><span class="ms">[ ] cpu family  : 6</span><span class="as">*</span></div>
<div class="lr" style="top:946px"><span class="ts">2026-04-13 21:38:31.102  8064-8064  </span><b class="tg">HACK</b><span class="pk">cocomelonc.hackcpu</span><i class="bd"></i><span class="ms">[ ] model       : 6</span><span class="as">*</span></div>
<div class="lr" style="top:968px"><span class="ts">2026-04-13 21:38:31.102  8064-8064  </span><b class="tg">HACK</b><span class="pk">cocomelonc.hackcpu</span><i class="bd"></i><span class="ms">[ ] model name  : Android virtual processor</span><span class="as">*</span></div>
<div class="lr" style="top:990px"><span class="ts">2026-04-13 21:38:31.102  8064-8064  </span><b class="tg">HACK</b><span class="pk">cocomelonc.hackcpu</span><i class="bd"></i><span class="ms">[ ] stepping    : 3</span><span class="as">*</span></div>
<div class="lr" style="top:1012px"><span class="ts">2026-04-13 21:38:31.102  8064-8064  </span><b class="tg">HACK</b><span class="pk">cocomelonc.hackcpu</span><i class="bd"></i><span class="ms">[ ] microcode   : 0x1</span><span class="as">*</span></div>
<div class="lr" style="top:1034px"><span class="ts">2026-04-13 21:38:31.102  8064-8064  </span><b class="tg">HACK</b><span class="pk">cocomelonc.hackcpu</span><i class="bd"></i><span class="ms">[ ] cpu MHz     : 0.001</span><span class="as">*</span></div>
<div class="lr" style="top:1056px"><span class="ts">2026-04-13 21:38:31.102  8064-8064  </span><b class="tg">HACK</b><span class="pk">cocomelonc.hackcpu</span><i class="bd"></i><span class="ms">[ ] cache size  : 16384 KB</span><span class="as">*</span></div>
<div class="a" style="left:1844px;top:285px;width:19px;height:776px;background:#2B2D30"></div>
<div class="a" style="left:1835px;top:720px;width:8px;height:92px;background:#45474B"></div>
<div class="a" style="left:56px;top:1052px;width:94px;height:7px;background:#4A4C50"></div>
<svg style="left:17.0px;top:295.0px" width="16" height="16" viewBox="0 0 16 16"><g fill="none" stroke="#CED0D6" stroke-width="1.1" stroke-linecap="round" stroke-linejoin="round"><path d="M2 4H14"/><path d="M6 4V2.5H10V4"/><path d="M3.5 4L4.3 14H11.7L12.5 4"/><path d="M6.8 6.5V11.5M9.2 6.5V11.5"/></g></svg>
<svg style="left:17.0px;top:321.0px" width="16" height="16" viewBox="0 0 16 16"><g fill="none" stroke="#CED0D6" stroke-width="1.1" stroke-linecap="round" stroke-linejoin="round"><rect x="3.5" y="2.5" width="3" height="11" rx="0.5"/><rect x="9.5" y="2.5" width="3" height="11" rx="0.5"/></g></svg>
<svg style="left:17.0px;top:347.0px" width="16" height="16" viewBox="0 0 16 16"><g fill="none" stroke="#CED0D6" stroke-width="1.1" stroke-linecap="round" stroke-linejoin="round"><path d="M13 8A5 5 0 1 1 11.5 4.3"/><path d="M12 1.5V4.8H8.7"/></g></svg>
<svg style="left:17.0px;top:373.0px" width="16" height="16" viewBox="0 0 16 16"><g fill="none" stroke="#CED0D6" stroke-width="1.1" stroke-linecap="round" stroke-linejoin="round"><path d="M2 4H7M2 7.5H6M2 13H14"/><path d="M11 3V10.5M8.5 8L11 10.5L13.5 8"/></g></svg>
<svg style="left:17.0px;top:399.0px" width="16" height="16" viewBox="0 0 16 16"><g fill="none" stroke="#CED0D6" stroke-width="1.1" stroke-linecap="round" stroke-linejoin="round"><path d="M8 14V2.5M3.5 7L8 2.5L12.5 7"/></g></svg>
<svg style="left:17.0px;top:425.0px" width="16" height="16" viewBox="0 0 16 16"><g fill="none" stroke="#CED0D6" stroke-width="1.1" stroke-linecap="round" stroke-linejoin="round"><path d="M8 2V13.5M3.5 9L8 13.5L12.5 9"/></g></svg>
<svg style="left:17.0px;top:451.0px" width="16" height="16" viewBox="0 0 16 16"><g fill="none" stroke="#CED0D6" stroke-width="1.1" stroke-linecap="round" stroke-linejoin="round"><path d="M2 3H14M2 8H12.5Q14.5 8 14.5 10Q14.5 12 12.5 12H8.5"/><path d="M10.5 10L8.5 12L10.5 14"/><path d="M2 12H5.5"/></g></svg>
<svg style="left:17.0px;top:484.0px" width="16" height="16" viewBox="0 0 16 16"><g fill="none" stroke="#CED0D6" stroke-width="1.1" stroke-linecap="round" stroke-linejoin="round"><path d="M2.5 4V13.5H12"/><path d="M13.5 2.5L7.5 8.5"/><path d="M7.3 4.5V8.7H11.5"/></g></svg>
<svg style="left:17.0px;top:510.0px" width="16" height="16" viewBox="0 0 16 16"><g fill="none" stroke="#CED0D6" stroke-width="1.1" stroke-linecap="round" stroke-linejoin="round"><path d="M2.5 4V13.5H12"/><path d="M7.5 9.5L13.5 3.5"/><path d="M9.3 2.8H13.7V7.2"/></g></svg>
<svg style="left:17.0px;top:542.0px" width="16" height="16" viewBox="0 0 16 16"><g fill="none" stroke="#CED0D6" stroke-width="1.1" stroke-linecap="round" stroke-linejoin="round"><path d="M2 3.5H14M2 7.5H14M2 11.5H14" stroke-width="1"/><circle cx="10.3" cy="3.5" r="1.3" fill="#2B2D30" stroke-width="1"/><circle cx="5.8" cy="7.5" r="1.3" fill="#2B2D30" stroke-width="1"/><circle cx="9.5" cy="11.5" r="1.3" fill="#2B2D30" stroke-width="1"/></g></svg>
<svg style="left:17.0px;top:576.0px" width="16" height="16" viewBox="0 0 16 16"><g fill="none" stroke="#CED0D6" stroke-width="1.1" stroke-linecap="round" stroke-linejoin="round"><rect x="2" y="2" width="12" height="12" rx="2"/><path d="M8 2.5V13.5" stroke="#9DA0A8" stroke-width="1.8"/></g></svg>
<svg style="left:17.0px;top:609.0px" width="16" height="16" viewBox="0 0 16 16"><g fill="none" stroke="#CED0D6" stroke-width="1.1" stroke-linecap="round" stroke-linejoin="round"><path d="M1.5 5.5Q1.5 4.5 2.5 4.5H5L6 2.5H10L11 4.5H13.5Q14.5 4.5 14.5 5.5V12.5Q14.5 13.5 13.5 13.5H2.5Q1.5 13.5 1.5 12.5Z"/><circle cx="8" cy="9" r="2.5"/></g></svg>
<svg style="left:17.0px;top:635.0px" width="16" height="16" viewBox="0 0 16 16"><g fill="none" stroke="#CED0D6" stroke-width="1.1" stroke-linecap="round" stroke-linejoin="round"><rect x="1.5" y="4" width="9" height="8.5" rx="0.8"/><path d="M10.5 7L14.5 4.5V12L10.5 9.5"/></g></svg>
<div class="a" style="left:15px;top:475px;width:20px;height:1px;background:#43454A"></div>
<div class="a" style="left:15px;top:534px;width:20px;height:1px;background:#43454A"></div>
<div class="a" style="left:15px;top:567px;width:20px;height:1px;background:#43454A"></div>
<div class="a" style="left:15px;top:600px;width:20px;height:1px;background:#43454A"></div>

<!-- status bar -->
<div class="a" style="left:0;top:1061px;width:1863px;height:13px;background:#2B2D30;border-top:1px solid #1E1F22"></div>
<div class="t" style="left:0px;top:1068.15px;font-size:14px;line-height:14px;color:#A8ABB0;font-weight:normal;">ackCpu</div>
<div class="t" style="left:85px;top:1068.15px;font-size:14px;line-height:14px;color:#A8ABB0;font-weight:normal;">app</div>
<div class="t" style="left:130px;top:1068.15px;font-size:14px;line-height:14px;color:#A8ABB0;font-weight:normal;">src</div>
<div class="t" style="left:186px;top:1068.15px;font-size:14px;line-height:14px;color:#A8ABB0;font-weight:normal;">main</div>
<div class="t" style="left:237px;top:1068.15px;font-size:14px;line-height:14px;color:#A8ABB0;font-weight:normal;">java</div>
<div class="t" style="left:287px;top:1068.15px;font-size:14px;line-height:14px;color:#A8ABB0;font-weight:normal;">cocomelonc</div>
<div class="t" style="left:385px;top:1068.15px;font-size:14px;line-height:14px;color:#A8ABB0;font-weight:normal;">hackcpu</div>
<div class="t" style="left:481px;top:1068.15px;font-size:14px;line-height:14px;color:#A8ABB0;font-weight:normal;">HackNetwork</div>
<div class="t" style="left:610px;top:1068.15px;font-size:14px;line-height:14px;color:#A8ABB0;font-weight:normal;">logcpuinfo</div>
<svg style="left:53.0px;top:1069.0px" width="12" height="12" viewBox="0 0 16 16"><g fill="none" stroke="#A8ABB0" stroke-width="1.0" stroke-linecap="round" stroke-linejoin="round"><path d="M6 3.5L10.5 8L6 12.5"/></g></svg>
<svg style="left:112.0px;top:1069.0px" width="12" height="12" viewBox="0 0 16 16"><g fill="none" stroke="#A8ABB0" stroke-width="1.0" stroke-linecap="round" stroke-linejoin="round"><path d="M6 3.5L10.5 8L6 12.5"/></g></svg>
<svg style="left:155.0px;top:1069.0px" width="12" height="12" viewBox="0 0 16 16"><g fill="none" stroke="#A8ABB0" stroke-width="1.0" stroke-linecap="round" stroke-linejoin="round"><path d="M6 3.5L10.5 8L6 12.5"/></g></svg>
<svg style="left:219.0px;top:1069.0px" width="12" height="12" viewBox="0 0 16 16"><g fill="none" stroke="#A8ABB0" stroke-width="1.0" stroke-linecap="round" stroke-linejoin="round"><path d="M6 3.5L10.5 8L6 12.5"/></g></svg>
<svg style="left:269.0px;top:1069.0px" width="12" height="12" viewBox="0 0 16 16"><g fill="none" stroke="#A8ABB0" stroke-width="1.0" stroke-linecap="round" stroke-linejoin="round"><path d="M6 3.5L10.5 8L6 12.5"/></g></svg>
<svg style="left:366.0px;top:1069.0px" width="12" height="12" viewBox="0 0 16 16"><g fill="none" stroke="#A8ABB0" stroke-width="1.0" stroke-linecap="round" stroke-linejoin="round"><path d="M6 3.5L10.5 8L6 12.5"/></g></svg>
<svg style="left:444.0px;top:1069.0px" width="12" height="12" viewBox="0 0 16 16"><g fill="none" stroke="#A8ABB0" stroke-width="1.0" stroke-linecap="round" stroke-linejoin="round"><path d="M6 3.5L10.5 8L6 12.5"/></g></svg>
<svg style="left:573.0px;top:1069.0px" width="12" height="12" viewBox="0 0 16 16"><g fill="none" stroke="#A8ABB0" stroke-width="1.0" stroke-linecap="round" stroke-linejoin="round"><path d="M6 3.5L10.5 8L6 12.5"/></g></svg>
<div class="t" style="left:1602px;top:1069.42px;font-size:12.5px;line-height:12.5px;color:#A8ABB0;font-weight:normal;">110:10</div>
<div class="t" style="left:1656px;top:1068.15px;font-size:14px;line-height:14px;color:#A8ABB0;font-weight:normal;">LF</div>
<div class="t" style="left:1688px;top:1068.57px;font-size:13.5px;line-height:13.5px;color:#A8ABB0;font-weight:normal;">UTF-8</div>
<div class="t" style="left:1781px;top:1068.15px;font-size:14px;line-height:14px;color:#A8ABB0;font-weight:normal;">4 spaces</div>
<svg style="left:1747px;top:1066px" width="14" height="14" viewBox="0 0 14 14"><path d="M2 12L3 8L9 2L12 5L6 11Z" fill="none" stroke="#A8ABB0" stroke-width="1.1"/><path d="M1 1L13 13" stroke="#A8ABB0" stroke-width="1.1"/></svg>
<svg style="left:1853px;top:1066px" width="14" height="14" viewBox="0 0 14 14"><circle cx="7" cy="7" r="5.5" fill="none" stroke="#A8ABB0" stroke-width="1.1"/></svg>
<svg style="left:70px;top:1068px" width="14" height="14" viewBox="0 0 14 14"><rect x="1.5" y="1.5" width="10" height="10" rx="2" fill="none" stroke="#548AF7" stroke-width="1.2"/></svg>
<svg style="left:170px;top:1068px" width="14" height="14" viewBox="0 0 14 14"><rect x="1.5" y="1.5" width="10" height="10" rx="2" fill="none" stroke="#548AF7" stroke-width="1.2"/></svg>
<svg style="left:461px;top:1066px" width="16" height="16" viewBox="0 0 16 16"><circle cx="8" cy="8" r="6.5" fill="none" stroke="#548AF7" stroke-width="1.2"/><circle cx="8" cy="8" r="3" fill="none" stroke="#548AF7" stroke-width="1.2"/></svg>
<svg style="left:591px;top:1066px" width="16" height="16" viewBox="0 0 16 16"><circle cx="8" cy="8" r="6.5" fill="#5A2F35" stroke="#DB5C5C" stroke-width="1.2"/></svg>
</body></html>
